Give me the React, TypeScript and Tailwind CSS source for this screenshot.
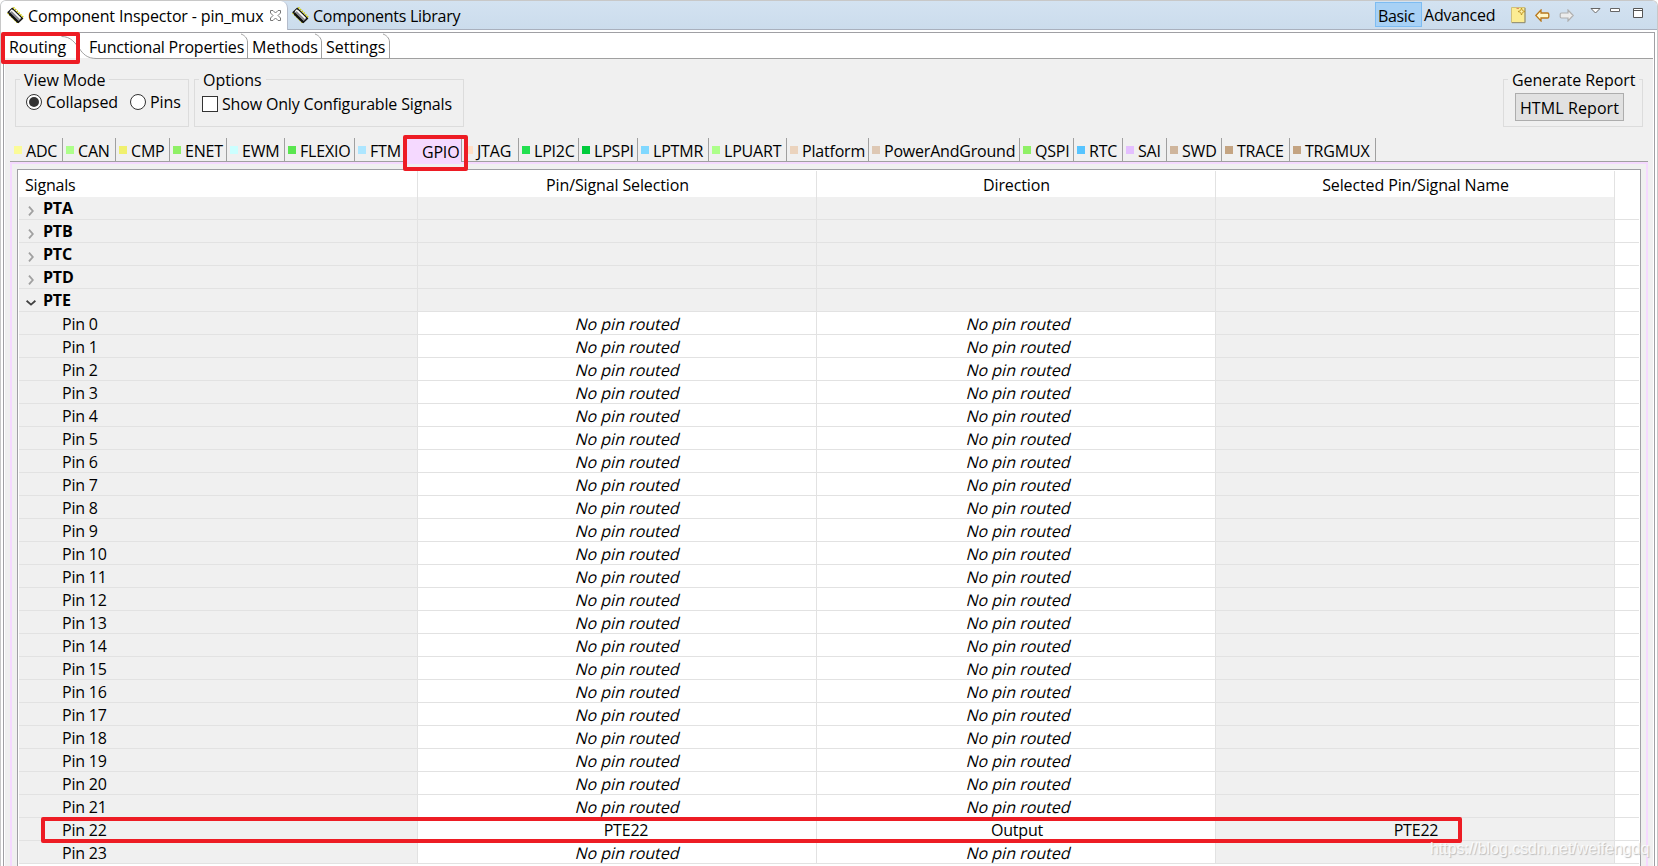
import { useState } from 'react';

const PERIPHERALS = [
  { name: 'ADC', color: '#fbfb98', width: 53 },
  { name: 'CAN', color: '#adff8a', width: 53 },
  { name: 'CMP', color: '#f0f06e', width: 54 },
  { name: 'ENET', color: '#8ff066', width: 57 },
  { name: 'EWM', color: '#ccffff', width: 58 },
  { name: 'FLEXIO', color: '#5ae650', width: 70 },
  { name: 'FTM', color: '#ade6ff', width: 52 },
  { name: 'GPIO', color: '#f5d9ff', width: 55 },
  { name: 'JTAG', color: '#ffdfc7', width: 57 },
  { name: 'LPI2C', color: '#22e050', width: 60 },
  { name: 'LPSPI', color: '#00cc3c', width: 59 },
  { name: 'LPTMR', color: '#80d8ff', width: 71 },
  { name: 'LPUART', color: '#adff8a', width: 78 },
  { name: 'Platform', color: '#ebd3bd', width: 82 },
  { name: 'PowerAndGround', color: '#dec8b4', width: 151 },
  { name: 'QSPI', color: '#8ff066', width: 54 },
  { name: 'RTC', color: '#57c4ff', width: 49 },
  { name: 'SAI', color: '#e4c0ff', width: 44 },
  { name: 'SWD', color: '#cfb59c', width: 55 },
  { name: 'TRACE', color: '#c4a482', width: 68 },
  { name: 'TRGMUX', color: '#c4a482', width: 86 },
];

const PORTS = ['PTA', 'PTB', 'PTC', 'PTD', 'PTE'];
const COLUMNS = ['Pin/Signal Selection', 'Direction', 'Selected Pin/Signal Name'];

const PINS = Array.from({ length: 24 }, (_, i) => ({
  name: `Pin ${i}`,
  routed: i === 22,
  pin: 'PTE22',
  direction: 'Output',
}));

function ChipIcon() {
  return (
    <svg width="17" height="17" viewBox="0 0 17 17" className="shrink-0">
      <path d="M6 .6 L16 10.6" stroke="#d0cc10" strokeWidth="2.4" strokeDasharray="1.5 1" />
      <path d="M.9 5.6 L10.9 15.6" stroke="#d0cc10" strokeWidth="2.4" strokeDasharray="1.5 1" />
      <path d="M5.2 1.4 L15.4 11.4 L11.4 15.2 L1.2 5.2 Z" fill="#8a8a90" stroke="#151515" strokeWidth="1.4" />
      <path d="M2.4 6.6 L11.2 15.2" stroke="#111" strokeWidth="2.2" />
      <path d="M5.2 3.4 L13.4 11.4" stroke="#fff" strokeWidth="1.6" />
      <path d="M3.2 4.6 L5.2 2.8" stroke="#fff" strokeWidth="1.2" />
    </svg>
  );
}

function CloseIcon() {
  return (
    <svg width="11" height="11" viewBox="0 0 11 11" fill="#fff" stroke="#777" className="shrink-0">
      <path d="M.5 .5 H3 L5.5 3 L8 .5 H10.5 V3 L8 5.5 L10.5 8 V10.5 H8 L5.5 8 L3 10.5 H.5 V8 L3 5.5 L.5 3 Z" />
    </svg>
  );
}

function Arrow({ expanded }: { expanded: boolean }) {
  return expanded ? (
    <svg width="10" height="6" viewBox="0 0 10 6" fill="none" stroke="#404040" strokeWidth="1.8">
      <path d="M.6 .8 L5 4.6 L9.4 .8" />
    </svg>
  ) : (
    <svg width="6" height="10" viewBox="0 0 6 10" fill="none" stroke="#a0a0a0" strokeWidth="1.8" className="ml-0.5">
      <path d="M1 .6 L4.8 5 L1 9.4" />
    </svg>
  );
}

// Right edge of an inactive top tab
function TabEdge() {
  return (
    <svg width="8" height="25" viewBox="0 0 8 25" fill="none" stroke="#a0a0a0" className="absolute right-0 top-0">
      <path d="M1 1 C4 2 7.5 5 7.5 9 V25" />
    </svg>
  );
}

// Unrouted cells are slanted upright glyphs, not the italic face
function NotRouted() {
  return <span className="inline-block -skew-x-[14deg] tracking-normal">No pin routed</span>;
}

function ViewBar() {
  return (
    <div className="flex h-[29px] bg-linear-to-b from-[#d3e2f1] to-[#cbdcec]">
      <div className="flex w-[287px] items-center rounded-tr-[7px] border-r border-[#b4bccb] bg-white pl-1.5">
        <ChipIcon />
        <span className="ml-1 w-[242px] pt-px tracking-[-0.15px]">Component Inspector - pin_mux</span>
        <CloseIcon />
      </div>
      <div className="flex flex-1 items-center border-b border-[#a9b0bd] pl-1">
        <ChipIcon />
        <span className="ml-1 pt-0.5 tracking-[-0.28px]">Components Library</span>
        <div className="ml-auto flex h-full items-start pr-[14px]">
          <button className="mt-px flex h-[25px] w-[47px] items-center border border-[#7dbcf2] bg-[#a8d1f5] pt-0.5 pl-[2px] tracking-[-0.35px]">Basic</button>
          <button className="mt-1 ml-[2px] w-[87px] text-left">Advanced</button>
          <svg width="15" height="17" viewBox="0 0 15 17" className="mt-1.5">
            <path d="M.5 .5 H14 V15.5 H.5 Z" fill="#fbec93" stroke="#cfc07a" />
            <path d="M1 15.7 H14 V1" fill="none" stroke="#8c8c78" />
            <path d="M10.5 1 L11.4 3.6 L14 4.5 L11.4 5.4 L10.5 8 L9.6 5.4 L7 4.5 L9.6 3.6 Z" fill="#fff3b0" stroke="#b98b1c" strokeWidth=".8" />
            <path d="M5.5 1.5 H8" stroke="#e08a6a" />
          </svg>
          <svg width="15" height="13" viewBox="0 0 15 13" className="mt-2 ml-[9px]">
            <path d="M.8 6.5 L6 1 V4 H12.5 Q13.8 4 13.8 5.2 V7.8 Q13.8 9 12.5 9 H6 V12 Z" fill="#fff6c9" stroke="#b9781e" strokeWidth="1.3" />
          </svg>
          <svg width="15" height="13" viewBox="0 0 15 13" className="mt-2 ml-[9px]">
            <path d="M14.2 6.5 L9 1 V4 H2.5 Q1.2 4 1.2 5.2 V7.8 Q1.2 9 2.5 9 H9 V12 Z" fill="#ececec" stroke="#b0b0b0" strokeWidth="1.2" />
          </svg>
          <svg width="11" height="6" viewBox="0 0 11 6" className="mt-[7px] ml-4" fill="#fff" stroke="#666">
            <path d="M1 .5 H10 L5.5 5 Z" />
          </svg>
          <svg width="10" height="4" viewBox="0 0 10 4" className="mt-[7px] ml-[9px]" fill="#fff" stroke="#666">
            <path d="M.5 .5 H9.5 V3.5 H.5 Z" />
          </svg>
          <svg width="10" height="10" viewBox="0 0 10 10" className="mt-[7px] ml-[13px]" fill="#fff" stroke="#555">
            <path d="M.5 .5 H9.5 V9.5 H.5 Z M.5 2.5 H9.5" />
          </svg>
        </div>
      </div>
    </div>
  );
}

function PageTabs() {
  return (
    <div className="flex h-[25px] bg-white">
      <div className="relative flex w-[85px] items-center pt-[3px] pl-1 tracking-[-0.05px]">
        Routing
        <svg width="36" height="25" viewBox="0 0 36 25" fill="none" stroke="#a0a0a0" className="absolute top-[1px] left-[56px]">
          <path d="M.5 2.5 C10 2.5 14 9 18 14 C22 20 26 24.5 35.5 24.5" />
        </svg>
      </div>
      <div className="relative flex w-[158px] items-center pt-[3px] tracking-[-0.2px]"><TabEdge /><span className="-ml-px">Functional Properties</span></div>
      <div className="relative flex w-[74px] items-center pt-[3px] pl-1 tracking-normal"><TabEdge />Methods</div>
      <div className="relative flex w-[68px] items-center pt-[3px] pl-1 tracking-normal"><TabEdge />Settings</div>
    </div>
  );
}

function Group({ title, className, children }: { title: string; className: string; children: React.ReactNode }) {
  return (
    <div className={`h-12 border border-[#dcdcdc] ${className}`}>
      <div className="ml-1 flex h-0 items-center">
        <span className="bg-[#f0f0f0] px-1 tracking-[-0.05px]">{title}</span>
      </div>
      {children}
    </div>
  );
}

export default function App() {
  const [viewMode, setViewMode] = useState('Collapsed');
  const [onlyConfigurable, setOnlyConfigurable] = useState(false);
  const [activeTab, setActiveTab] = useState('GPIO');

  return (
    <div className="relative h-[866px] w-[1658px] overflow-hidden rounded-t-[6px] border-x border-t border-[#c8c8c8] bg-white font-['Open_Sans','Noto_Sans',sans-serif] text-base leading-5 tracking-[-0.2px] whitespace-nowrap text-black">
      <ViewBar />

      <div className="mx-0.5 mt-0.5 h-[834px] border-x border-t border-[#a0a0a4] px-px">
        <PageTabs />

        <div className="flex h-[808px] flex-col bg-[#f0f0f0]">
          <div className="ml-[90px] border-t border-[#a0a0a0]" />

          {/* Options */}
          <div className="mt-5 flex pr-[10px] pl-[10px]">
            <Group title="View Mode" className="w-[174px]">
              <div className="mt-[13px] ml-2.5 flex">
                {['Collapsed', 'Pins'].map(mode => (
                  <label key={mode} onClick={() => setViewMode(mode)} className="flex h-[18px] w-[104px] shrink-0 items-center last:w-16">
                    <span className="flex h-4 w-4 items-center justify-center rounded-full border border-[#333] bg-white">
                      {viewMode === mode && <span className="h-2.5 w-2.5 rounded-full bg-[#333]" />}
                    </span>
                    <span className="ml-1 tracking-[-0.1px]">{mode}</span>
                  </label>
                ))}
              </div>
            </Group>
            <Group title="Options" className="ml-[5px] w-[270px]">
              <label onClick={() => setOnlyConfigurable(!onlyConfigurable)} className="mt-[15px] ml-[7px] flex h-[18px] items-center">
                <span className="h-4 w-4 border border-[#333] bg-white text-center text-xs leading-3.5">{onlyConfigurable && '✓'}</span>
                <span className="ml-1 tracking-[-0.17px]">Show Only Configurable Signals</span>
              </label>
            </Group>
            <Group title="Generate Report" className="ml-auto w-[140px]">
              <button className="mt-[13px] ml-[11px] flex h-7 w-[109px] items-center justify-center border border-[#adadad] bg-[#e1e1e1] pt-px tracking-[0.1px]">
                HTML Report
              </button>
            </Group>
          </div>

          {/* Peripheral tabs */}
          <div className="mt-[11px] mr-[5px] ml-[5px] flex h-[25px] border-b border-[#a0a0a0]">
            {PERIPHERALS.map(p => (
              <button
                key={p.name}
                onClick={() => setActiveTab(p.name)}
                className={`flex shrink-0 items-center border-r border-[#a0a0a0] pt-[3px] pl-[3px] first:pl-1 ${activeTab === p.name ? '-mb-px bg-[#f5d9ff]' : ''}`}
                style={{ width: p.width }}
              >
                <span className="mb-0.5 h-2 w-2 shrink-0" style={{ backgroundColor: p.color }} />
                <span className="ml-1">{p.name}</span>
              </button>
            ))}
          </div>

          <div className="mr-[5px] ml-[5px] flex-1 border-x-2 border-t-2 border-[#f5d9ff] px-[5px] pt-[5px]">
            {/* Signals table */}
            <div className="h-[697px] overflow-hidden border-x border-t border-[#a0a0a5] bg-white px-px">
              <div className="flex h-[27px] pt-px">
                <div className="flex w-[399px] items-center border-r border-[#e2e2e2] pt-0.5 pl-1.5">Signals</div>
                {COLUMNS.map(c => (
                  <div key={c} className="flex w-[399px] items-center justify-center border-r border-[#e2e2e2] pt-0.5 pl-px tracking-[-0.12px]">{c}</div>
                ))}
              </div>
              {PORTS.map(port => (
                <div key={port} className="flex h-[23px] border-b border-[#e2e2e2] font-bold">
                  <div className="flex w-[399px] items-center border-r border-[#e2e2e2] bg-[#f0f0f0]">
                    <span className="ml-[7px] flex w-[17px] justify-start pt-1.5">
                      <Arrow expanded={port === 'PTE'} />
                    </span>
                    {port}
                  </div>
                  {COLUMNS.map(c => <div key={c} className="w-[399px] border-r border-[#e2e2e2] bg-[#f0f0f0]" />)}
                </div>
              ))}
              {PINS.map(row => (
                <div key={row.name} className="flex h-[23px] border-b border-[#e2e2e2]">
                  <div className="flex w-[399px] items-center border-r border-[#e2e2e2] bg-[#f0f0f0] pt-px pl-[43px]">{row.name}</div>
                  <div className={`flex w-[399px] items-center justify-center border-r border-[#e2e2e2] pt-px ${row.routed ? 'pl-[18px]' : 'pl-[23px]'}`}>
                    {row.routed ? row.pin : <NotRouted />}
                  </div>
                  <div className={`flex w-[399px] items-center justify-center border-r border-[#e2e2e2] pt-px ${row.routed ? 'pl-0.5' : 'pl-1.5'}`}>
                    {row.routed ? row.direction : <NotRouted />}
                  </div>
                  <div className="flex w-[399px] items-center justify-center border-r border-[#e2e2e2] bg-[#f0f0f0] pt-px pl-0.5">
                    {row.routed && row.pin}
                  </div>
                </div>
              ))}
            </div>
          </div>
        </div>
      </div>

      {/* Highlight boxes */}
      <div className="absolute top-[31px] left-0 h-8 w-[79px] rounded-xs border-4 border-[#ed1c24]" />
      <div className="absolute top-[134px] left-[402px] h-9 w-[65px] rounded-xs border-4 border-[#ed1c24]" />
      <div className="absolute top-[816px] left-10 h-[26px] w-[1421px] rounded-xs border-4 border-[#ed1c24]" />

      <div className="absolute top-[836px] left-[1429px] font-['Liberation_Sans',sans-serif] text-base tracking-[-0.04px] text-white/80 [text-shadow:1px_1px_1px_#bbb]">
        https://blog.csdn.net/weifengdq
      </div>
    </div>
  );
}
